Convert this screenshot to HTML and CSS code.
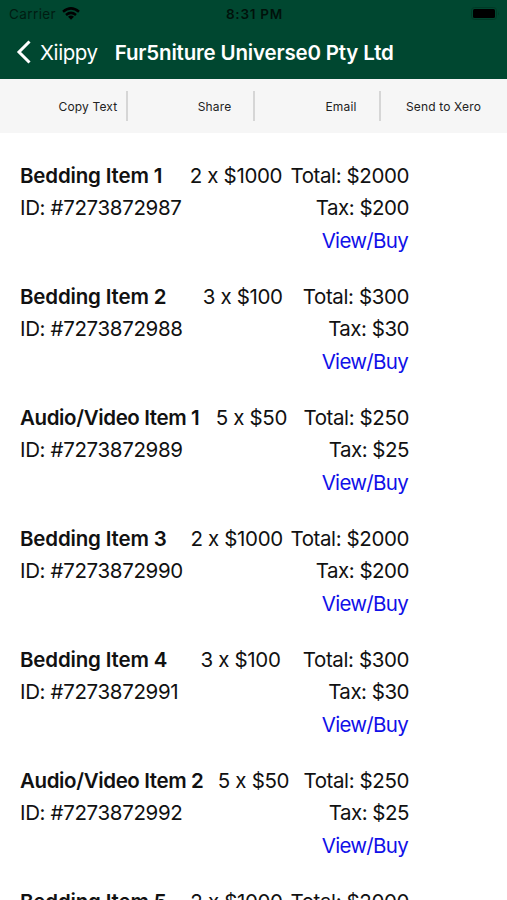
FILE: index.html
```
<!DOCTYPE html>
<html lang="en">
<head>
<meta charset="utf-8">
<title>Fur5niture Universe0 Pty Ltd</title>
<link rel="stylesheet" href="styles.css">
</head>
<body>
<header class="header">
  <div class="status">
    <div class="carrier"><span class="carrier-name">Carrier</span>
      <svg class="wifi" viewBox="0 0 18 13" width="18" height="13" fill="none" stroke="#000" stroke-width="2.5"><path d="M1 4.8Q9-2 17 4.8M4 8Q9 3.8 14 8"/><path d="M6 9.7Q9 7.4 12 9.7L9 12.8Z" fill="#000" stroke="none"/></svg>
    </div>
    <div class="time">8:31 PM</div>
    <svg class="battery" viewBox="0 0 30 14" width="30" height="14"><rect x="1.500" y="0.500" width="25" height="12" rx="3" fill="none" stroke="#003a26"/><rect x="3" y="2" width="22" height="9" rx="1.500" fill="#000"/><path d="M28 4.500q1.500 2 0 4z" fill="#003a26"/></svg>
  </div>
  <nav class="nav">
    <svg class="chevron" viewBox="0 0 16 24" width="16" height="24" fill="none" stroke="#fff" stroke-width="3"><path d="M13.500 1.500 3 12l10.500 10.500"/></svg>
    <span class="back">Xiippy</span>
    <h1 class="title">Fur5niture Universe0 Pty Ltd</h1>
  </nav>
</header>
<div class="toolbar">
  <div class="tool with-slot"><span>Copy Text</span></div>
  <div class="tool with-slot"><span>Share</span></div>
  <div class="tool with-slot"><span>Email</span></div>
  <div class="tool"><span>Send to Xero</span></div>
</div>
<main class="list">
  <section class="item"><div><div class="name">Bedding Item 1</div><div class="id">ID: #7273872987</div></div><div class="qty">2 x $1000</div><div class="sum"><div>Total: $2000</div><div class="tax">Tax: $200</div><a class="link">View/Buy</a></div></section>
  <section class="item"><div><div class="name">Bedding Item 2</div><div class="id">ID: #7273872988</div></div><div class="qty">3 x $100</div><div class="sum"><div>Total: $300</div><div class="tax">Tax: $30</div><a class="link">View/Buy</a></div></section>
  <section class="item"><div><div class="name long">Audio/Video Item 1</div><div class="id">ID: #7273872989</div></div><div class="qty">5 x $50</div><div class="sum"><div>Total: $250</div><div class="tax">Tax: $25</div><a class="link">View/Buy</a></div></section>
  <section class="item"><div><div class="name">Bedding Item 3</div><div class="id">ID: #7273872990</div></div><div class="qty">2 x $1000</div><div class="sum"><div>Total: $2000</div><div class="tax">Tax: $200</div><a class="link">View/Buy</a></div></section>
  <section class="item"><div><div class="name">Bedding Item 4</div><div class="id">ID: #7273872991</div></div><div class="qty">3 x $100</div><div class="sum"><div>Total: $300</div><div class="tax">Tax: $30</div><a class="link">View/Buy</a></div></section>
  <section class="item"><div><div class="name long">Audio/Video Item 2</div><div class="id">ID: #7273872992</div></div><div class="qty">5 x $50</div><div class="sum"><div>Total: $250</div><div class="tax">Tax: $25</div><a class="link">View/Buy</a></div></section>
  <section class="item"><div><div class="name">Bedding Item 5</div><div class="id">ID: #7273872993</div></div><div class="qty">2 x $1000</div><div class="sum"><div>Total: $2000</div><div class="tax">Tax: $200</div><a class="link">View/Buy</a></div></section>
</main>
</body>
</html>
```
FILE: styles.css
```
* { box-sizing: border-box; }
body {
  margin: 0;
  height: 900px;
  overflow: hidden;
  display: flex;
  flex-direction: column;
  background: #fff;
  color: #111;
  font-family: Inter, "Liberation Sans", sans-serif;
}
.header { flex: none; height: 79px; background: #004730; }
.status {
  height: 27px;
  display: grid;
  grid-template-columns: 1fr auto 1fr;
  align-items: center;
  padding: 0 7px 0 9px;
  color: #001c12;
  font-size: 13.500px;
}
.carrier { display: flex; align-items: center; gap: 6px; }
.carrier-name { letter-spacing: 0.4px; }
.time { font-weight: 600; color: #00120b; font-size: 13.500px; letter-spacing: 0.75px; }
.battery { justify-self: end; }
.nav { height: 50px; display: flex; align-items: center; padding-left: 16px; color: #fff; }
.back { margin-left: 8px; font-size: 20.500px; letter-spacing: -0.4px; }
.title { margin: 0 0 0 17px; font-size: 20.500px; font-weight: 600; letter-spacing: -0.170px; white-space: nowrap; }
.toolbar {
  flex: none;
  height: 54px;
  display: grid;
  grid-template-columns: 128px 127px 126px 1fr;
  align-items: center;
  background: #f6f6f6;
  color: #222;
  font-size: 12px;
}
.tool { height: 30px; display: flex; align-items: center; justify-content: center; white-space: nowrap; letter-spacing: 0.15px; }
.tool:not(:last-child) { border-right: 2px solid #d6d6d6; }
.tool:last-child { padding-right: 1px; }
.with-slot { padding-left: 50px; }
.with-slot + .with-slot { padding-left: 48px; }
.list { flex: none; width: 409px; padding: 27px 0 0 20px; font-size: 20.500px; letter-spacing: -0.350px; line-height: 32.300px; }
.item { height: 121px; display: flex; justify-content: space-between; white-space: nowrap; }
.name { font-weight: 600; letter-spacing: -0.170px; }
.long { letter-spacing: -0.380px; }
.sum { text-align: right; letter-spacing: -0.400px; }
.tax { letter-spacing: -0.500px; }
.link { display: block; padding-right: 1px; color: #1010e8; letter-spacing: -0.700px; }
```
